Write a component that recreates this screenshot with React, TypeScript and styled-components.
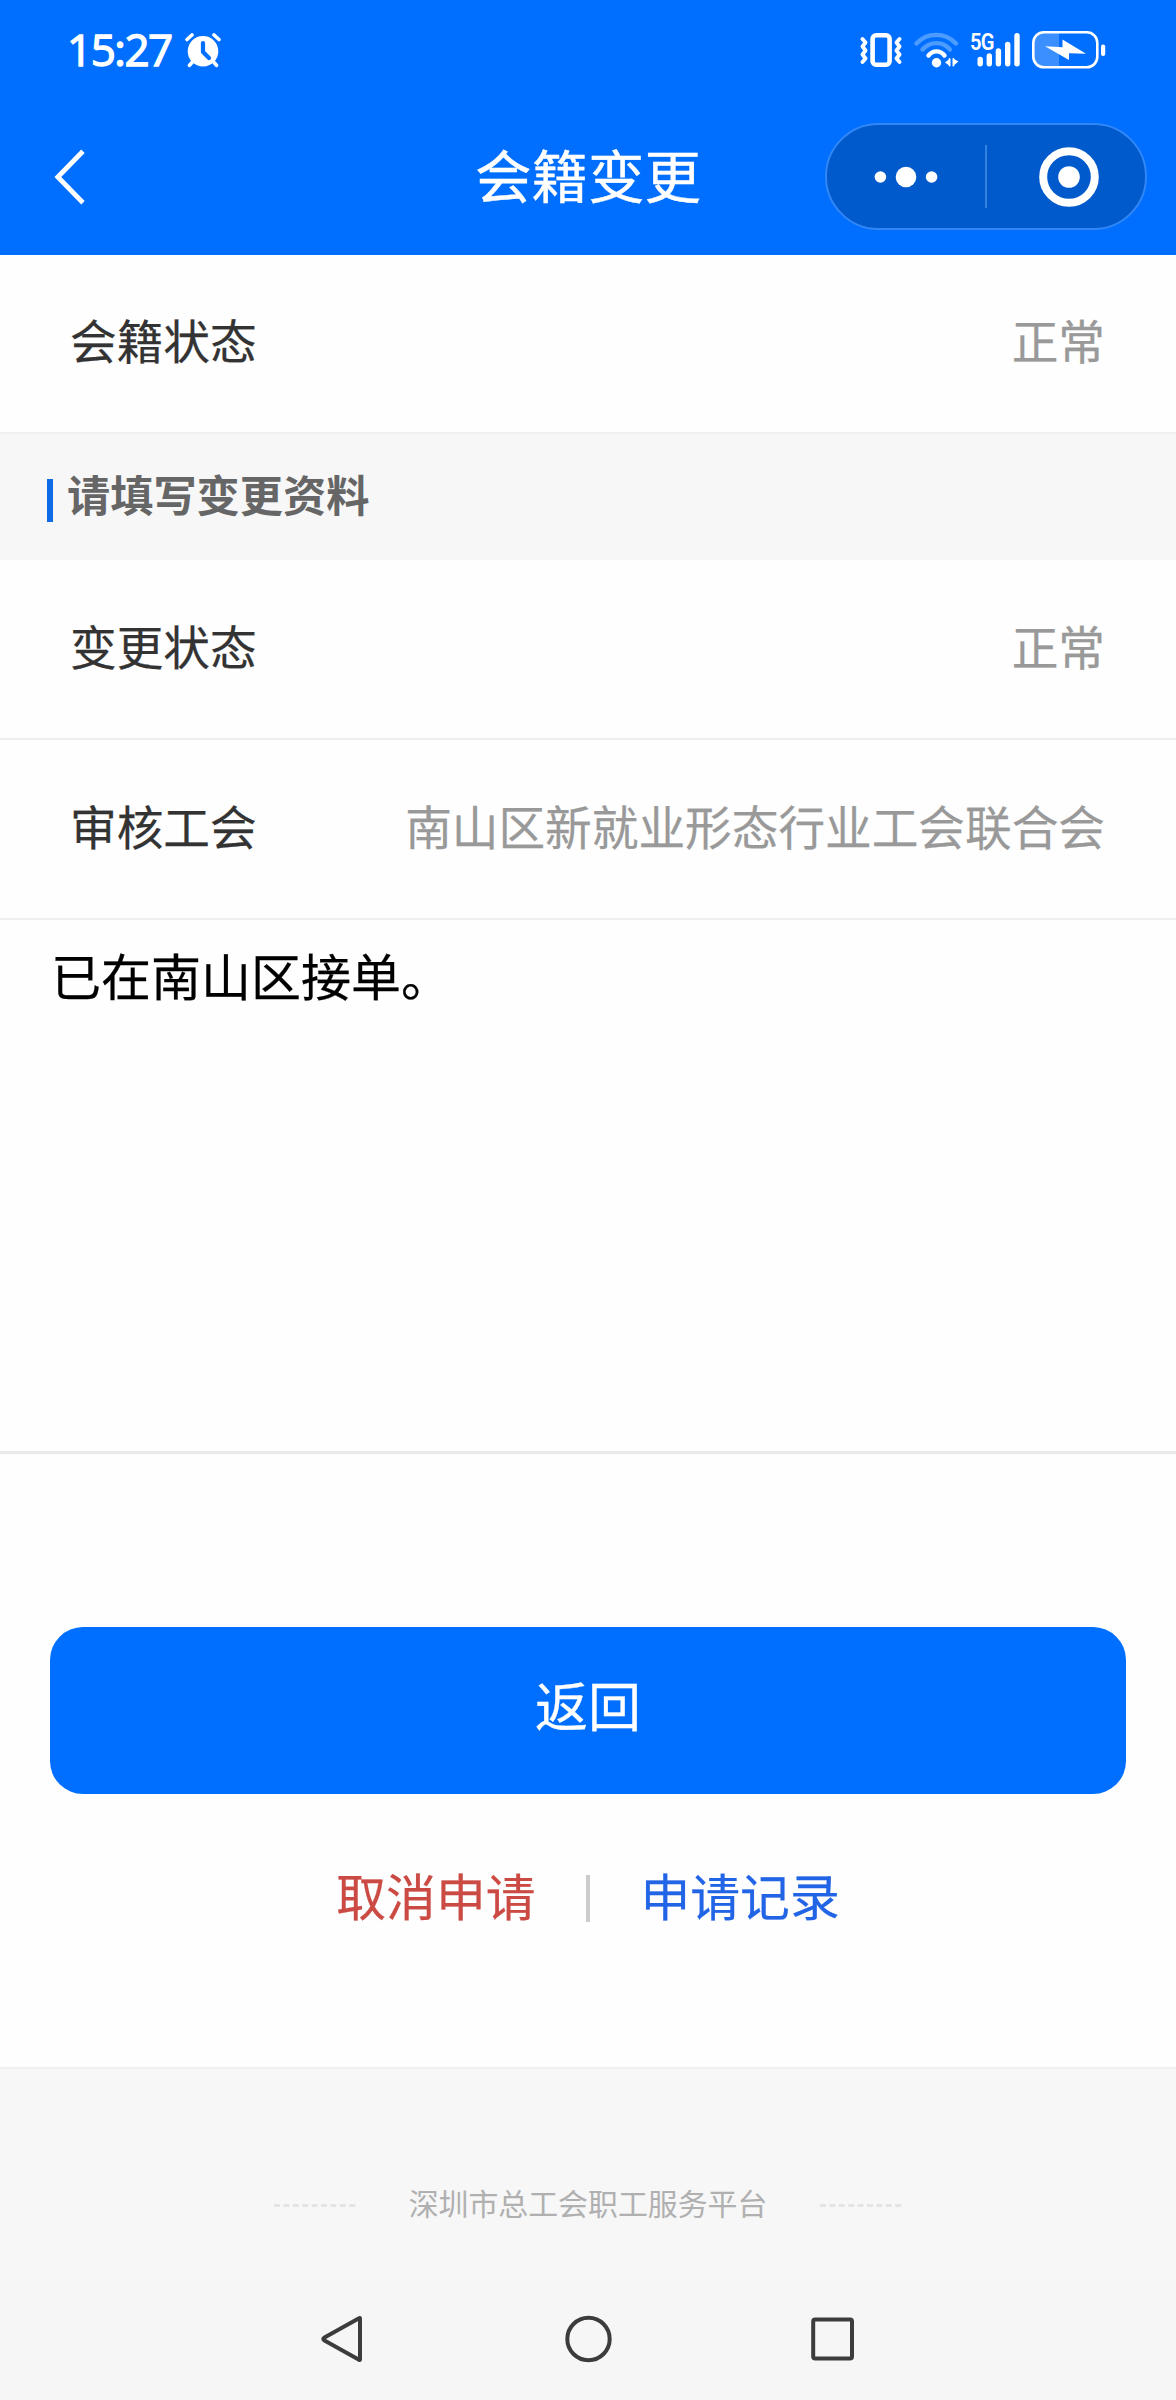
import React from "react";
import styled, { createGlobalStyle } from "styled-components";

const GlobalStyle = createGlobalStyle`
  *, *::before, *::after { box-sizing: border-box; }
  body {
    margin: 0;
    background: #fefefe;
    font-family: "Noto Sans CJK SC", "Noto Sans", sans-serif;
  }
  button { border: 0; padding: 0; background: none; font-family: inherit; }
`;

const Screen = styled.div`
  width: 1176px;
  height: 2400px;
  display: flex;
  flex-direction: column;
  background: #fefefe;
  overflow: hidden;
`;

const TopArea = styled.header`
  height: 255px;
  flex: none;
  display: flex;
  flex-direction: column;
  background: #006fff;
  color: #fff;
`;

const StatusBar = styled.div`
  height: 100px;
  padding: 0 70px 0 67px;
  display: flex;
  align-items: center;
  justify-content: space-between;
`;

const StatusGroup = styled.div<{ $gap: number }>`
  display: flex;
  align-items: center;
  gap: ${(p) => p.$gap}px;
`;

const Clock = styled.span`
  width: 103px;
  margin-top: -2px;
  font: 500 44px/60px "Open Sans", "Noto Sans", sans-serif;
  letter-spacing: -1.5px;
  white-space: nowrap;
  -webkit-text-stroke: 1.3px currentColor;
`;

const NavBar = styled.div`
  height: 155px;
  padding: 0 29px 2px;
  display: grid;
  grid-template-columns: 1fr auto 1fr;
  align-items: center;
`;

const BackButton = styled.button`
  width: 50px;
  height: 60px;
  margin-left: 16px;
  display: flex;
`;

const Title = styled.h1`
  margin: 0;
  padding-bottom: 7px;
  font-size: 56.5px;
  line-height: 80px;
  font-weight: 400;
  -webkit-text-stroke: 0.4px currentColor;
`;

const Capsule = styled.div`
  justify-self: end;
  width: 322px;
  height: 107px;
  border: 2px solid #3187f5;
  border-radius: 54px;
  background: #005acc;
  display: grid;
  grid-template-columns: 158px 2px 158px;
  align-items: center;
`;

const CapsuleHalf = styled.button<{ $shift?: number }>`
  height: 100%;
  padding-left: ${(p) => p.$shift ?? 0}px;
  display: flex;
  align-items: center;
  justify-content: center;
`;

const CapsuleDivider = styled.span`
  height: 63px;
  background: #3583e0;
`;

const Row = styled.div<{ $height: number }>`
  height: ${(p) => p.$height}px;
  flex: none;
  padding: 0 71px 9px 70px;
  display: flex;
  align-items: center;
  justify-content: space-between;
  border-bottom: 2px solid #efefef;
  font-size: 46.67px;
  line-height: 60px;
  -webkit-text-stroke: 0.25px currentColor;
`;

const Label = styled.span`
  color: #333;
`;

const Value = styled.span`
  color: #999;
`;

const SectionHeader = styled.div`
  height: 126px;
  flex: none;
  padding: 45px 47px 0;
  display: flex;
  gap: 14px;
  background: #f7f7f7;
`;

const SectionMark = styled.span`
  width: 6px;
  height: 43px;
  background: #0f6ae6;
`;

const SectionTitle = styled.h2`
  margin: -16px 0 0;
  font-size: 43.2px;
  line-height: 60px;
  font-weight: 700;
  color: #666;
`;

const Remark = styled.div`
  height: 534px;
  flex: none;
  padding: 19px 51px;
  border-bottom: 3px solid #e9e9e9;
  font-size: 50px;
  line-height: 70px;
  color: #000;
  -webkit-text-stroke: 0.25px currentColor;
`;

const Actions = styled.main`
  height: 615px;
  flex: none;
  padding: 173px 50px 0;
  display: flex;
  flex-direction: column;
  border-bottom: 2px solid #f0f0f0;
`;

const PrimaryButton = styled.button`
  height: 167px;
  padding-bottom: 14px;
  border-radius: 33px;
  background: #006fff;
  color: #fff;
  font-size: 53px;
  line-height: 80px;
  -webkit-text-stroke: 0.3px currentColor;
`;

const LinkRow = styled.div`
  height: 83px;
  margin-top: 63px;
  display: flex;
  align-items: center;
  justify-content: center;
`;

const TextLink = styled.button<{ $color: string }>`
  padding-bottom: 10px;
  color: ${(p) => p.$color};
  font-size: 49.8px;
  line-height: 74px;
  -webkit-text-stroke: 0.25px currentColor;
`;

const LinkDivider = styled.span`
  width: 4px;
  height: 47px;
  margin: 0 51px 0 50px;
  background: #ccc;
`;

const Footer = styled.footer`
  height: 210px;
  flex: none;
  padding-top: 111px;
  display: flex;
  justify-content: center;
  gap: 53px;
  background: #f7f7f7;
  color: #b0b0b0;
  font-size: 29.9px;
  line-height: 46px;
`;

const FooterText = styled.span`
  margin-top: -1px;
`;

const SystemNav = styled.nav`
  flex: 1;
  padding: 0 321px 1px 320px;
  display: flex;
  align-items: center;
  justify-content: space-between;
  background: #f6f6f6;
`;

const Dashes = () => (
  <svg width="82" height="46" viewBox="0 0 82 46">
    <path d="M0 25.5H82" stroke="#e4e4e4" strokeWidth="3" strokeDasharray="6 3.4" />
  </svg>
);

const AlarmIcon = () => (
  <svg width="36" height="36" viewBox="0 0 36 36" fill="none" strokeLinecap="round">
    <circle cx="18" cy="19.3" r="15.3" fill="#fff" />
    <path d="M2 7.5 7 3M34 7.5 29 3M7 30.5 4.5 33.3M29 30.5 31.5 33.3" stroke="#fff" strokeWidth="3.6" />
    <path d="M18 11V20L24 26" stroke="#006fff" strokeWidth="4.2" strokeLinejoin="round" />
  </svg>
);

const VibrateIcon = () => (
  <svg width="43" height="36" viewBox="0 0 43 36" fill="none" stroke="#fff">
    <rect x="12.6" y="3.3" width="17" height="29.4" rx="3.5" strokeWidth="4.6" />
    <path d="M2.5 7 5.5 10.5 2.5 14.5 5.5 18.5 2.5 22.5 5.5 26.5 2.5 30M39.5 7 36.5 10.5 39.5 14.5 36.5 18.5 39.5 22.5 36.5 26.5 39.5 30" strokeWidth="3.8" strokeLinecap="round" strokeLinejoin="round" />
  </svg>
);

const WifiIcon = () => (
  <svg width="45" height="36" viewBox="0 0 45 36" fill="none" strokeLinecap="round">
    <path d="M2.5 11.5C13 0 31 0 42 11.5" stroke="#4c9bff" strokeWidth="4.4" />
    <path d="M8.5 17.5C16 9 29 9 36 17.5" stroke="#4c9bff" strokeWidth="4.4" />
    <path d="M14.5 23.5C19 18 26 18 30.5 23.5" stroke="#fff" strokeWidth="4.4" />
    <circle cx="22.5" cy="30.7" r="4.7" fill="#fff" />
    <path d="M36 26.5V34L31 30.5ZM39 26.5V34L44.5 29.5Z" fill="#fff" />
    <path d="M35.6 27V33.6M39.4 27V33.6" stroke="#fff" strokeWidth="1.8" />
  </svg>
);

const SignalBox = styled.span`
  position: relative;
  display: flex;
`;

const NetworkType = styled.span`
  position: absolute;
  left: 0;
  top: -1px;
  font: 600 24px/24px Roboto, "Open Sans", sans-serif;
  letter-spacing: -0.8px;
  transform: scaleX(0.84);
  transform-origin: left center;
`;

const SignalIcon = () => (
  <SignalBox>
    <NetworkType>5G</NetworkType>
    <svg width="51" height="38" viewBox="0 0 51 38" stroke="#fff" strokeWidth="5.4" strokeLinecap="round">
      <path d="M10.2 28.5V32.8M19.3 25V32.8M28.4 20V32.8M37.7 13.5V32.8M47 4.7V32.8" />
    </svg>
  </SignalBox>
);

const BatteryIcon = () => (
  <svg width="74" height="38" viewBox="0 0 74 38">
    <path d="M11 2H27V36H11Q2 36 2 27V11Q2 2 11 2Z" fill="#3c8fff" />
    <rect x="1.3" y="1.3" width="64" height="35" rx="10.5" fill="none" stroke="#fff" strokeWidth="2.6" />
    <path d="M13 15.2 30.5 16.2V8.5L54 22.8 37 22.2V29Z" fill="#fff" />
    <rect x="69" y="13.5" width="4.2" height="11.5" rx="2" fill="#fff" />
  </svg>
);

const BackIcon = () => (
  <svg width="50" height="60" viewBox="0 0 50 60" fill="none">
    <path d="M38 4.2 12.8 30 38 55.8" stroke="#fff" strokeWidth="4.8" />
  </svg>
);

const MoreIcon = () => (
  <svg width="66" height="24" viewBox="0 0 66 24" fill="#fff">
    <circle cx="7.4" cy="12" r="5.8" />
    <circle cx="33" cy="12" r="10.3" />
    <circle cx="58.6" cy="12" r="5.8" />
  </svg>
);

const TargetIcon = () => (
  <svg width="62" height="62" viewBox="0 0 62 62">
    <circle cx="31" cy="31" r="25.8" fill="none" stroke="#fff" strokeWidth="8" />
    <circle cx="31" cy="31" r="10.8" fill="#fff" />
  </svg>
);

const NavBackIcon = () => (
  <svg width="44" height="48" viewBox="0 0 44 48" fill="none">
    <path d="M40 3.5V44.5Q40 45.5 39 44.8L4.5 25.5Q2 24 4.5 22.5L39 3.2Q40 2.6 40 3.5Z" stroke="#3c3c3c" strokeWidth="4" strokeLinejoin="round" />
  </svg>
);

const NavHomeIcon = () => (
  <svg width="48" height="48" viewBox="0 0 48 48" fill="none">
    <circle cx="24.5" cy="24" r="21.2" stroke="#3c3c3c" strokeWidth="4" />
  </svg>
);

const NavRecentIcon = () => (
  <svg width="44" height="44" viewBox="0 0 44 44" fill="none">
    <rect x="2.2" y="2.6" width="38.8" height="38.8" rx="2" stroke="#3c3c3c" strokeWidth="4" />
  </svg>
);

export default function App() {
  return (
    <>
      <GlobalStyle />
      <Screen>
        <TopArea>
          <StatusBar>
            <StatusGroup $gap={15}>
              <Clock>15:27</Clock>
              <AlarmIcon />
            </StatusGroup>
            <StatusGroup $gap={11}>
              <VibrateIcon />
              <WifiIcon />
              <SignalIcon />
              <BatteryIcon />
            </StatusGroup>
          </StatusBar>
          <NavBar>
            <BackButton aria-label="返回">
              <BackIcon />
            </BackButton>
            <Title>会籍变更</Title>
            <Capsule>
              <CapsuleHalf>
                <MoreIcon />
              </CapsuleHalf>
              <CapsuleDivider />
              <CapsuleHalf $shift={6}>
                <TargetIcon />
              </CapsuleHalf>
            </Capsule>
          </NavBar>
        </TopArea>

        <Row $height={179}>
          <Label>会籍状态</Label>
          <Value>正常</Value>
        </Row>
        <SectionHeader>
          <SectionMark />
          <SectionTitle>请填写变更资料</SectionTitle>
        </SectionHeader>
        <Row $height={180}>
          <Label>变更状态</Label>
          <Value>正常</Value>
        </Row>
        <Row $height={180}>
          <Label>审核工会</Label>
          <Value>南山区新就业形态行业工会联合会</Value>
        </Row>
        <Remark>已在南山区接单。</Remark>

        <Actions>
          <PrimaryButton>返回</PrimaryButton>
          <LinkRow>
            <TextLink $color="#cb4a43">取消申请</TextLink>
            <LinkDivider />
            <TextLink $color="#2264e6">申请记录</TextLink>
          </LinkRow>
        </Actions>

        <Footer>
          <Dashes />
          <FooterText>深圳市总工会职工服务平台</FooterText>
          <Dashes />
        </Footer>
        <SystemNav>
          <NavBackIcon />
          <NavHomeIcon />
          <NavRecentIcon />
        </SystemNav>
      </Screen>
    </>
  );
}
